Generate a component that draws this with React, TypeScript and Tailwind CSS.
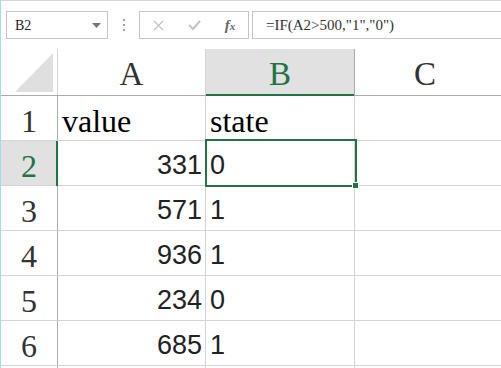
import React from "react";

const serif = { fontFamily: '"Liberation Serif", "Times New Roman", serif' };
const sans = { fontFamily: '"Liberation Sans", Arial, sans-serif' };

const rows = [
  { n: 1, a: "value", b: "state", header: true },
  { n: 2, a: "331", b: "0" },
  { n: 3, a: "571", b: "1" },
  { n: 4, a: "936", b: "1" },
  { n: 5, a: "234", b: "0" },
  { n: 6, a: "685", b: "1" },
];

export default function App() {
  return (
    <div className="relative w-[501px] h-[368px] overflow-hidden bg-white border-l border-[#a9d8e8]">
      {/* toolbar */}
      <div className="h-[49px] border-t border-[#d6d6d6] flex items-start pt-[10px] pl-[5px]">
        <div className="w-[102px] h-[28px] border border-[#c6c6c6] flex items-center justify-between pl-[8px] pr-[6px]">
          <span className="text-[14px] text-[#222]" style={serif}>B2</span>
          <svg width="9" height="5" viewBox="0 0 9 5"><path d="M0 0 L9 0 L4.5 5 Z" fill="#777" /></svg>
        </div>
        <div className="w-[31px] h-[28px] flex flex-col items-center justify-center gap-[3px]">
          <div className="w-[2px] h-[2px] bg-[#a0a0a0]" />
          <div className="w-[2px] h-[2px] bg-[#a0a0a0]" />
          <div className="w-[2px] h-[2px] bg-[#a0a0a0]" />
        </div>
        <div className="w-[110px] h-[28px] border border-[#c6c6c6] flex items-center">
          <div className="w-[36px] flex justify-center">
            <svg width="11" height="11" viewBox="0 0 11 11"><path d="M1 1 L10 10 M10 1 L1 10" stroke="#c4c4c4" strokeWidth="1.3" /></svg>
          </div>
          <div className="w-[36px] flex justify-center">
            <svg width="13" height="10" viewBox="0 0 13 10"><path d="M1 5 L5 9 L12 1" stroke="#c4c4c4" strokeWidth="2" fill="none" /></svg>
          </div>
          <div className="w-[36px] flex justify-center">
            <span className="text-[15px] italic font-bold text-[#666]" style={serif}>f<span className="text-[11px]">x</span></span>
          </div>
        </div>
        <div className="ml-[3px] flex-1 h-[28px] border border-[#c6c6c6] border-r-0 flex items-center pl-[13px]">
          <span className="text-[15px] text-[#333]" style={serif}>=IF(A2&gt;500,"1","0")</span>
        </div>
      </div>

      {/* column headers */}
      <div className="flex h-[47px] border-b border-[#ababab]">
        <div className="relative w-[57px] border-r border-[#d4d4d4] flex items-center">
          <svg width="57" height="46" viewBox="0 0 57 46" className="absolute left-0 top-0">
            <path d="M14 43 L52 4 L52 43 Z" fill="#dfdfdf" />
          </svg>
        </div>
        <div className="w-[148px] border-r border-[#d4d4d4] flex items-center justify-center pt-[4px]">
          <span className="text-[33px] leading-none text-[#333]" style={serif}>A</span>
        </div>
        <div className="w-[149px] border-r border-[#ababab] bg-[#e1e1e1] relative flex items-center justify-center pt-[4px]">
          <span className="text-[33px] leading-none text-[#217346]" style={serif}>B</span>
          <div className="absolute left-0 right-0 bottom-[-1px] h-[2px] bg-[#217346]" />
        </div>
        <div className="flex-1 flex items-center justify-center pt-[4px] pr-[6px]">
          <span className="text-[33px] leading-none text-[#333]" style={serif}>C</span>
        </div>
      </div>

      {/* rows */}
      {rows.map((r) => {
        const sel = r.n === 2;
        return (
          <div key={r.n} className="flex h-[45px] border-b border-[#d4d4d4]">
            <div className={`relative w-[57px] border-r border-[#ababab] flex items-end justify-center pb-[3px] ${sel ? "bg-[#e1e1e1]" : ""}`}>
              <span className={`text-[32px] leading-none ${sel ? "text-[#217346]" : "text-[#333]"}`} style={serif}>{r.n}</span>
              {sel && <div className="absolute top-0 bottom-[-1px] right-[-1px] w-[2px] bg-[#217346]" />}
            </div>
            <div className={`w-[148px] border-r border-[#d4d4d4] flex items-end ${r.header ? "justify-start pl-[4px] pb-[3px]" : "justify-end pr-[3px] pb-[6px]"}`}>
              {r.header ? (
                <span className="text-[32px] leading-none text-black" style={serif}>{r.a}</span>
              ) : (
                <span className="text-[27px] leading-none text-[#222]" style={sans}>{r.a}</span>
              )}
            </div>
            <div className={`w-[149px] border-r border-[#d4d4d4] flex items-end justify-start pl-[4px] ${r.header ? "pb-[3px]" : "pb-[6px]"}`}>
              {r.header ? (
                <span className="text-[32px] leading-none text-black" style={serif}>{r.b}</span>
              ) : (
                <span className="text-[27px] leading-none text-[#222]" style={sans}>{r.b}</span>
              )}
            </div>
            <div className="flex-1" />
          </div>
        );
      })}
      <div className="flex h-[45px]">
        <div className="w-[57px] border-r border-[#ababab]" />
        <div className="w-[148px] border-r border-[#d4d4d4]" />
        <div className="w-[149px] border-r border-[#d4d4d4]" />
      </div>

      {/* active cell B2 */}
      <div className="absolute left-[204px] top-[139px] w-[152px] h-[48px] border-2 border-[#217346] pointer-events-none" />
      <div className="absolute left-[351px] top-[182px] w-[7px] h-[7px] bg-[#217346] border border-white" />
    </div>
  );
}
